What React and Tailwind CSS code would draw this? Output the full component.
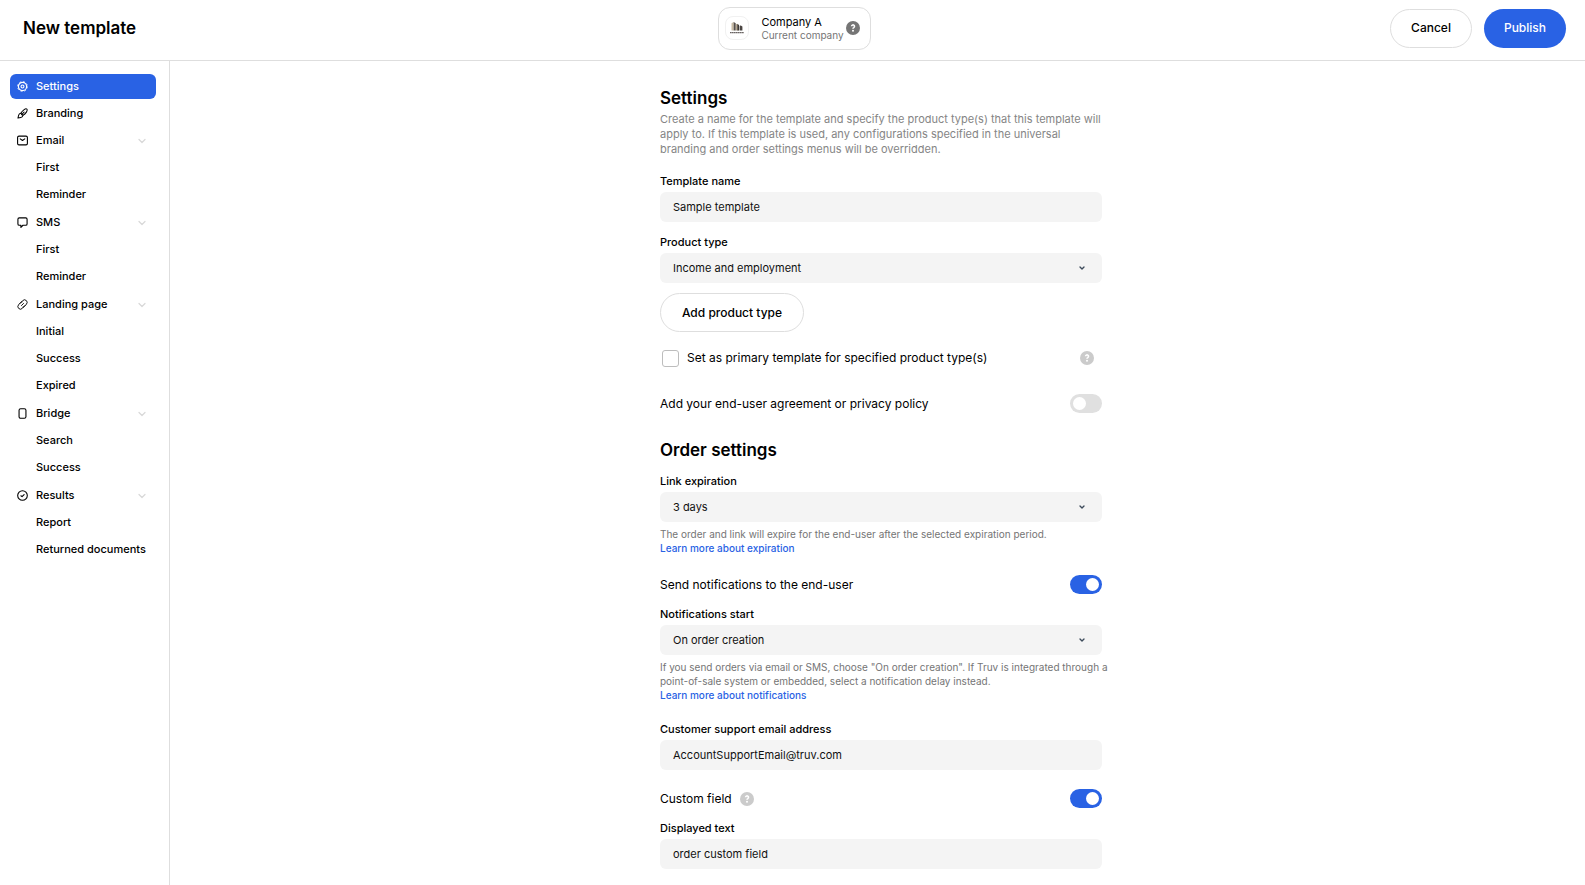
import React, { useState } from "react";
import { ChevronDown } from "lucide-react";

const icon = {
  className: "size-[11px] shrink-0",
  viewBox: "0 0 24 24",
  fill: "none",
  stroke: "currentColor",
  strokeWidth: 2.4,
  strokeLinecap: "round",
  strokeLinejoin: "round",
  "aria-hidden": true,
};

const GearIcon = () => (
  <svg {...icon}>
    <circle cx="12" cy="12" r="9" strokeWidth="2.600" />
    <circle cx="12" cy="12" r="10.800" strokeWidth="1.600" strokeLinecap="butt" strokeDasharray="4.240 4.240" />
    <circle cx="12" cy="12" r="3.200" strokeWidth="2.400" />
  </svg>
);
const BrushIcon = () => (
  <svg {...icon} strokeWidth={2.2}>
    <path d="M21.500 2.500c1.500 1.500.5 4-1 6.500-2 3.200-4.500 5.500-7.500 7l-4.500-4.500c1.500-3 4-5.500 6.500-7.500 2.500-1.800 5-3 6.500-1.500z" />
    <path d="M8.500 11.500c-3.500.2-4.500 2-5 4.500L2 22l6.500-1.200c2.700-.5 4.300-1.800 4.500-4.800" />
    <path d="M10 14.500L15.500 9" />
  </svg>
);
const MailIcon = () => (
  <svg {...icon}>
    <rect x="1.300" y="2.500" width="21.400" height="19" rx="3" />
    <path d="M7 8.500l5 3.500 5-3.500" />
  </svg>
);
const ChatIcon = () => (
  <svg {...icon}>
    <path d="M5 2h14a3 3 0 0 1 3 3v10a3 3 0 0 1-3 3h-6l-4.500 4.500V18H5a3 3 0 0 1-3-3V5a3 3 0 0 1 3-3z" />
  </svg>
);
const LinkIcon = () => (
  <svg {...icon} strokeWidth={2}>
    <path d="M7 9.500l5.500-6a5.600 5.600 0 0 1 8.300 7.500l-4.300 5a5.600 5.600 0 0 1-3.500 1.800" />
    <path d="M17 14.500l-5.500 6A5.600 5.600 0 0 1 3.200 13l4.300-5A5.600 5.600 0 0 1 11 6.200" />
    <path d="M14.200 9.800l-4.400 4.400" />
  </svg>
);
const PhoneIcon = () => (
  <svg {...icon}>
    <rect x="4.500" y="1.500" width="15" height="21" rx="3.500" />
  </svg>
);
const CheckIcon = () => (
  <svg {...icon}>
    <circle cx="12" cy="12" r="10.500" />
    <path d="M8.500 12.500l2.500 2 4.500-4.500" />
  </svg>
);

const HelpIcon = ({ className }) => (
  <svg className={"size-3.5 shrink-0 " + className} viewBox="0 0 14 14" aria-hidden="true">
    <circle cx="7" cy="7" r="7" fill="currentColor" />
    <path
      d="M5.600 5.300a1.450 1.450 0 1 1 2.200 1.300c-.6.300-.8.500-.8 1.100"
      fill="none"
      stroke="white"
      strokeWidth="1.600"
    />
    <circle cx="7" cy="9.800" r="1" fill="white" />
  </svg>
);

const CompanyLogo = () => (
  <span className="flex size-6 items-center justify-center rounded-lg border border-[#f1f1f1]">
    <svg className="w-4" viewBox="0 0 16 12" aria-hidden="true">
      <path d="M2.500 1.200l2.200-1.200v8.500H2.500z" fill="#c9bca6" />
      <path d="M4.700 0l2 1.200v7.300h-2z" fill="#57504b" />
      <path d="M7 2.200l1.200-.5 1.300 1.200v5.600H7z" fill="#b3a590" />
      <path d="M8.400 2l1.600 1v5.500H8.400z" fill="#3b3735" />
      <path d="M10.600 3.800l1.200-.4 1.600 1.200v3.900h-2.800z" fill="#4b4542" />
      <path d="M1 10.600h14" stroke="#6b6563" strokeWidth="1.400" strokeDasharray="1.700 .3" />
    </svg>
  </span>
);

const NAV = [
  { label: "Settings", Icon: GearIcon, active: true },
  { label: "Branding", Icon: BrushIcon },
  { label: "Email", Icon: MailIcon, items: ["First", "Reminder"] },
  { label: "SMS", Icon: ChatIcon, items: ["First", "Reminder"] },
  { label: "Landing page", Icon: LinkIcon, items: ["Initial", "Success", "Expired"] },
  { label: "Bridge", Icon: PhoneIcon, items: ["Search", "Success"] },
  { label: "Results", Icon: CheckIcon, items: ["Report", "Returned documents"] },
];

function NavGroup({ label, Icon, active, items }) {
  return (
    <li>
      <a
        href="#"
        aria-current={active ? "page" : undefined}
        className={
          "flex h-[25px] items-center rounded-md pr-2 pl-1.5 " +
          (active ? "bg-[#2962e4] text-white" : "text-black")
        }
      >
        <span className="flex w-5 items-center pl-px">
          <Icon />
        </span>
        <span className="grow">{label}</span>
        {items && <ChevronDown className="size-3 text-[#d9d9d9]" strokeWidth={2.5} aria-hidden="true" />}
      </a>
      {items && (
        <ul className="mt-0.5 flex flex-col gap-0.5 pb-px">
          {items.map((item) => (
            <li key={item}>
              <a href="#" className="flex h-[25px] items-center pl-[26px] whitespace-nowrap">
                {item}
              </a>
            </li>
          ))}
        </ul>
      )}
    </li>
  );
}

const fieldClass =
  "h-[30px] w-full appearance-none rounded-md bg-[#f4f4f4] px-[13px] text-[11px] text-[#111111] outline-none focus:ring-1 focus:ring-[#2962e4]";

function TextField({ id, label, value, type = "text" }) {
  return (
    <div className="flex flex-col gap-[3px]">
      <label htmlFor={id} className="text-[11px] leading-4 font-medium">
        {label}
      </label>
      <input id={id} type={type} defaultValue={value} className={fieldClass} />
    </div>
  );
}

function SelectField({ id, label, options }) {
  return (
    <div className="flex flex-col gap-[3px]">
      <label htmlFor={id} className="text-[11px] leading-4 font-medium">
        {label}
      </label>
      <div className="relative">
        <select id={id} className={fieldClass}>
          {options.map((option) => (
            <option key={option}>{option}</option>
          ))}
        </select>
        <ChevronDown
          className="pointer-events-none absolute inset-y-0 right-4 my-auto size-2 text-[#3c4a5a]"
          strokeWidth={4}
          aria-hidden="true"
        />
      </div>
    </div>
  );
}

function ToggleRow({ id, label, initial, help }) {
  const [on, setOn] = useState(initial);
  return (
    <div className="flex h-5 justify-between">
      <div className="flex items-center gap-2">
        <label htmlFor={id} className="text-xs leading-5">
          {label}
        </label>
        {help && (
          <button type="button" aria-label={"About " + label}>
            <HelpIcon className="text-[#cbcbcb]" />
          </button>
        )}
      </div>
      <input
        id={id}
        type="checkbox"
        role="switch"
        checked={on}
        onChange={(event) => setOn(event.target.checked)}
        className="flex h-[19px] w-8 appearance-none items-center rounded-full bg-[#e0e0e0] px-[3px] before:size-[13px] before:rounded-full before:bg-white checked:justify-end checked:bg-[#2962e4]"
      />
    </div>
  );
}

function Hint({ children, link }) {
  return (
    <p className="mt-[5px] -mr-2 text-[10px] leading-[14px] text-[#757575]">
      {children}
      <a href="#" className="block font-medium text-[#2962e4]">
        {link}
      </a>
    </p>
  );
}

export default function App() {
  return (
    <div className="flex min-h-screen flex-col bg-white font-['Inter',sans-serif] text-black">
      <header className="grid h-[61px] grid-cols-[1fr_auto_1fr] items-center border-b border-[#dedede] pr-[19px] pb-1 pl-[23px]">
        <h1 className="text-[17px] leading-6 font-semibold">New template</h1>
        <button type="button" className="flex h-[43px] items-center rounded-xl border border-[#dedede] pr-2.5 pl-1.5 text-left">
          <CompanyLogo />
          <span className="ml-3 flex flex-col">
            <span className="text-[11px] leading-[14px]">Company A</span>
            <span className="text-[10px] leading-[13px] text-[#757575]">Current company</span>
          </span>
          <HelpIcon className="ml-0.5 text-[#757575]" />
        </button>
        <div className="flex justify-end gap-3 text-xs font-medium">
          <button type="button" className="h-[39px] min-w-[82px] rounded-full border border-[#dedede] px-4">
            Cancel
          </button>
          <button type="button" className="h-[39px] min-w-[82px] rounded-full bg-[#2962e4] px-4 text-white">
            Publish
          </button>
        </div>
      </header>

      <div className="flex grow">
        <nav aria-label="Template sections" className="w-[170px] shrink-0 border-r border-[#dedede] pt-[13px] pr-[13px] pl-2.5 text-[11px] font-medium">
          <ul className="flex flex-col gap-0.5">
            {NAV.map((group) => (
              <NavGroup key={group.label} {...group} />
            ))}
          </ul>
        </nav>

        <main className="flex grow justify-center pt-[25px] pr-4 pb-4 pl-[23px]">
          <form className="w-full max-w-[442px]" onSubmit={(event) => event.preventDefault()}>
            <h2 className="text-[17px] leading-6 font-semibold">Settings</h2>
            <p className="mt-0.5 text-[11px] leading-[15px] text-[#858585]">
              Create a name for the template and specify the product type(s) that this template will apply to. If this
              template is used, any configurations specified in the universal branding and order settings menus will be
              overridden.
            </p>

            <div className="mt-4 flex flex-col gap-3">
              <TextField id="template-name" label="Template name" value="Sample template" />
              <SelectField id="product-type" label="Product type" options={["Income and employment", "Income", "Employment"]} />
            </div>

            <button type="button" className="mt-2.5 h-[39px] min-w-36 rounded-full border border-[#dedede] px-5 text-xs font-medium">
              Add product type
            </button>

            <div className="mt-4 flex h-5 items-center pr-2 pl-0.5">
              <input
                id="primary"
                type="checkbox"
                className="size-[17px] appearance-none rounded-[3px] border border-[#bdbdbd] checked:border-[#2962e4] checked:bg-[#2962e4]"
              />
              <label htmlFor="primary" className="ml-2 grow text-xs leading-5">
                Set as primary template for specified product type(s)
              </label>
              <button type="button" aria-label="About primary templates">
                <HelpIcon className="text-[#cbcbcb]" />
              </button>
            </div>

            <div className="mt-[26px]">
              <ToggleRow id="agreement" label="Add your end-user agreement or privacy policy" initial={false} />
            </div>

            <h2 className="mt-6 mb-[11px] text-[17px] leading-6 font-semibold">Order settings</h2>
            <SelectField id="expiration" label="Link expiration" options={["3 days", "7 days", "14 days"]} />
            <Hint link="Learn more about expiration">
              The order and link will expire for the end-user after the selected expiration period.
            </Hint>

            <div className="mt-5 mb-[11px]">
              <ToggleRow id="notify" label="Send notifications to the end-user" initial={true} />
            </div>
            <SelectField id="notify-start" label="Notifications start" options={["On order creation", "After 1 day"]} />
            <Hint link="Learn more about notifications">
              If you send orders via email or SMS, choose "On order creation". If Truv is integrated through a
              point-of-sale system or embedded, select a notification delay instead.
            </Hint>

            <div className="mt-[19px]">
              <TextField id="support-email" label="Customer support email address" type="email" value="AccountSupportEmail@truv.com" />
            </div>

            <div className="mt-[19px] mb-[11px]">
              <ToggleRow id="custom-field" label="Custom field" initial={true} help />
            </div>
            <TextField id="displayed-text" label="Displayed text" value="order custom field" />
          </form>
        </main>
      </div>
    </div>
  );
}
